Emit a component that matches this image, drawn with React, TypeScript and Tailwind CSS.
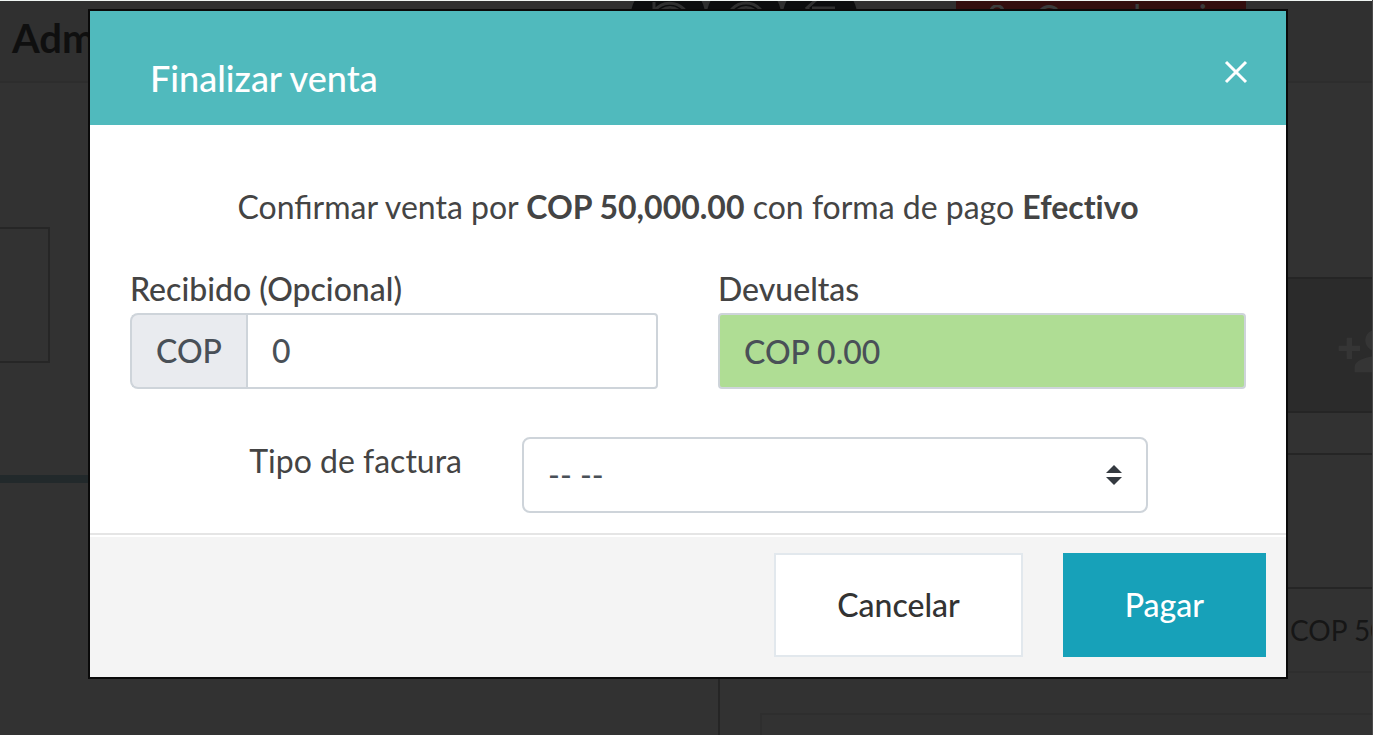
import { useState } from 'react';
import { MdPersonAdd } from 'react-icons/md';

const toolbarIcons = [
  'M24 21v10M25 29A19.5 19.5 0 1 1 24 53M32 29a14 14 0 0 1 16 0',
  'M40 22a19.5 19.5 0 1 1 0 39a19.5 19.5 0 0 1 0-39M32 29a14 14 0 0 1 16 0',
  'M35 18l-10 9l10 9M30 27h23M51 42l10 9l-10 9M56 51h-30',
];

function PageBehind() {
  return (
    <div aria-hidden="true" className="flex min-h-screen flex-col border-r border-[#4a4a4a]">
      <header className="relative flex h-[83px] shrink-0 items-start border-t border-b-2 border-t-[#f0f5f3] border-b-[#2d2d2d] bg-[#303030]">
        <p className="pt-3 pl-3 text-[40px] leading-[50px] font-bold text-[#0f0f0f]">Administrador</p>
        <div className="absolute inset-x-0 top-0 h-16 overflow-hidden">
          <div className="absolute -top-5 left-[630px] flex">
            {toolbarIcons.map((path) => (
              <span key={path} className="size-[76px] rounded-full bg-[#0c0d0e]">
                <svg
                  viewBox="0 0 76 76"
                  className="size-[76px]"
                  fill="none"
                  stroke="#303030"
                  strokeWidth="3"
                >
                  <path d={path} />
                </svg>
              </span>
            ))}
          </div>
          <div className="absolute top-0 left-[956px] flex h-16 w-[290px] items-start gap-4 overflow-hidden bg-[#330e0e] pl-[31px] text-[#3b3b3b]">
            <svg viewBox="0 0 32 32" className="mt-1 size-8" fill="none" stroke="currentColor" strokeWidth="3">
              <path d="M3 9h5M24 9h5M7 9l2 20h14l2-20M4 9a6 6 0 0 1 12-4" />
            </svg>
            <span className="text-[36px] leading-8 whitespace-nowrap">Cancelar visa</span>
          </div>
        </div>
      </header>

      <div className="flex flex-1">
        <div className="w-[720px] shrink-0 border-r-2 border-[#252525] pt-36">
          <div className="h-[136px] w-[50px] border-2 border-l-0 border-[#262626]" />
          <div className="mt-28 h-2 bg-[#22292b]" />
        </div>
        <div className="flex flex-1 flex-col overflow-hidden pt-[194px]">
          <div className="flex h-[136px] shrink-0 items-center justify-end border-y-2 border-[#252525] bg-[#2b2b2b] pt-3">
            <MdPersonAdd size={64} className="-mr-7 shrink-0 text-[#353535]" />
          </div>
          <div className="mt-10 h-[136px] shrink-0 border-y-2 border-[#252525]" />
          <div className="flex h-[84px] shrink-0 items-center border-b-2 border-[#2e2e2e] pl-[570px] text-[28px] whitespace-nowrap text-[#161616]">
            COP 50,000.00
          </div>
          <div className="mt-10 ml-10 flex-1 border-t-2 border-l-2 border-[#2e2e2e]" />
        </div>
      </div>
    </div>
  );
}

export default function App() {
  const [received, setReceived] = useState('0');

  return (
    <div className="relative h-screen overflow-hidden bg-[#323232] font-['Lato',sans-serif] text-[32px] leading-[48px] text-[#444444]">
      <PageBehind />

      <div className="absolute inset-0 pt-[9px] pr-[85px] pl-[88px]">
        <div
          role="dialog"
          aria-modal="true"
          aria-labelledby="dialog-title"
          className="border-2 border-[#0a0a0a] bg-white"
        >
          <div className="flex h-[114px] items-center justify-between bg-[#50babd] pr-[34px] pl-[60px] text-white">
            <h1 id="dialog-title" className="pt-5 text-[36px] font-medium">
              Finalizar venta
            </h1>
            <button type="button" aria-label="Cerrar" className="mt-2 flex size-8 items-center justify-center">
              <svg viewBox="0 0 32 32" className="size-8" fill="none" stroke="currentColor" strokeWidth="3">
                <path d="M6 6l20 20M26 6L6 26" />
              </svg>
            </button>
          </div>

          <form className="px-10 pt-[58px] pb-5">
            <p className="text-center">
              Confirmar venta por <b>COP 50,000.00</b> con forma de pago{' '}
              <b className="[font-variant-ligatures:none]">Efectivo</b>
            </p>

            <div className="mt-[34px] grid grid-cols-2 gap-[60px] font-medium">
              <div>
                <label htmlFor="received" className="block">
                  Recibido (Opcional)
                </label>
                <div className="flex h-[76px] text-[#495057]">
                  <span className="flex items-center rounded-l-lg border-2 border-r-0 border-[#ced4da] bg-[#e9ebef] px-6">
                    COP
                  </span>
                  <input
                    id="received"
                    value={received}
                    onChange={(e) => setReceived(e.target.value)}
                    className="min-w-0 flex-1 rounded-r-sm border-2 border-[#ced4da] bg-white px-6 outline-none"
                  />
                </div>
              </div>
              <div>
                <label htmlFor="change" className="block">
                  Devueltas
                </label>
                <input
                  id="change"
                  readOnly
                  value="COP 0.00"
                  className="block h-[76px] w-full rounded-sm border-2 border-[#ced4da] bg-[#afdd94] px-6 text-[#495057] outline-none"
                />
              </div>
            </div>

            <div className="mt-12 flex pr-[98px]">
              <label htmlFor="invoice-type" className="flex-1 pr-[60px] text-right">
                Tipo de factura
              </label>
              <div className="relative w-[626px]">
                <select
                  id="invoice-type"
                  className="block h-[76px] w-full appearance-none rounded-lg border-2 border-[#ced4da] bg-white px-6 text-[#495057] outline-none"
                >
                  <option>-- --</option>
                </select>
                <svg
                  viewBox="0 0 16 20"
                  fill="#343a40"
                  className="pointer-events-none absolute top-7 right-[26px] h-5 w-4"
                >
                  <path d="M8 0l8 8H0zM0 12h16l-8 8z" />
                </svg>
              </div>
            </div>
          </form>

          <div className="border-t-2 border-[#e5e5e5] pt-0.5">
            <div className="flex justify-end gap-10 bg-[#f4f4f4] px-5 pt-4 pb-5">
              <button
                type="button"
                className="h-[104px] border-2 border-[#e2e8ed] bg-white px-[61px] font-medium text-[#333333]"
              >
                Cancelar
              </button>
              <button type="button" className="h-[104px] bg-[#17a1b9] px-[62px] font-medium text-white">
                Pagar
              </button>
            </div>
          </div>
        </div>
      </div>
    </div>
  );
}
